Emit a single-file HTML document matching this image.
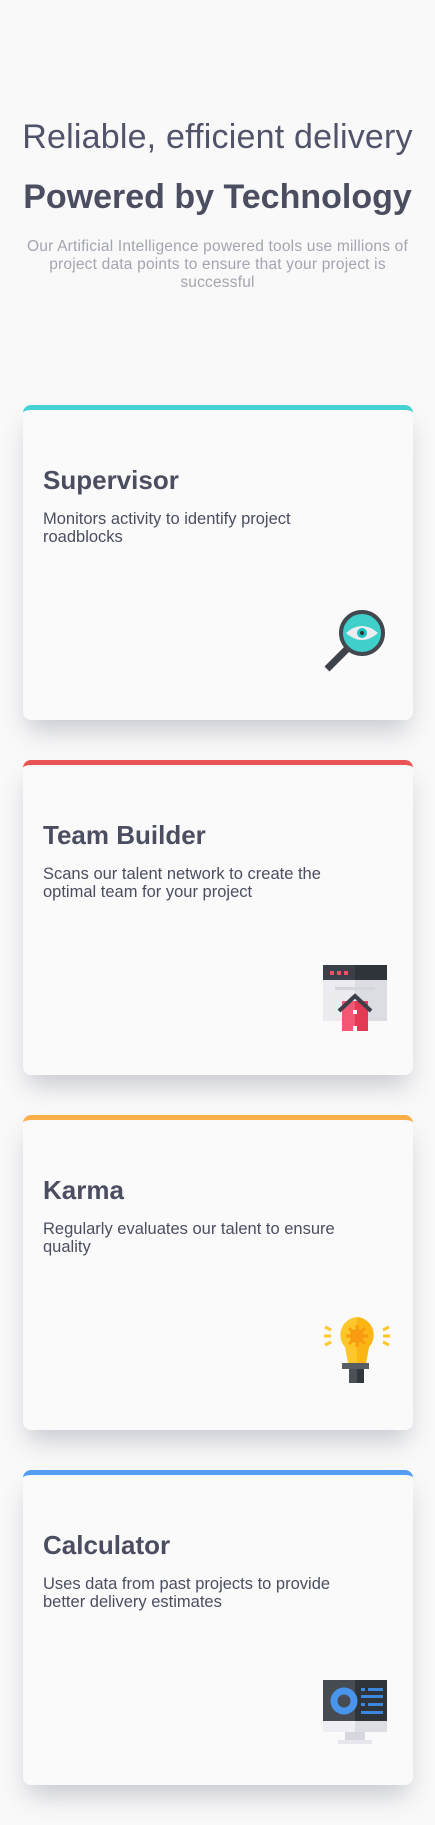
<!DOCTYPE html>
<html><head><meta charset="utf-8"><style>
*{margin:0;padding:0;box-sizing:border-box}
body{width:435px;height:1825px;background:#f9f9f9;font-family:"Liberation Sans",sans-serif;position:relative;overflow:hidden}
.h1{position:absolute;top:118px;left:0;width:435px;text-align:center;font-size:34px;font-weight:300;color:#50536a;letter-spacing:0.2px}
.h2{position:absolute;top:178px;left:0;width:435px;text-align:center;font-size:34px;font-weight:700;color:#4b4e60}
.p{position:absolute;top:238px;left:0;width:435px;text-align:center;font-size:15.5px;line-height:18px;color:#a3a5b0;letter-spacing:0.2px}
.card{position:absolute;left:23px;width:390px;height:315px;background:#fafafa;border-radius:8px;border-top:5px solid;box-shadow:0 15px 25px -5px rgba(70,75,100,0.28)}
.card h3{position:absolute;left:20px;top:55px;font-size:26px;font-weight:700;color:#4b4e60}
.card p{position:absolute;left:20px;top:100px;width:360px;font-size:16.5px;line-height:18px;color:#4b4e60;font-weight:300}
.card svg{position:absolute;left:290px;top:185px}
</style></head><body>
<div class="h1">Reliable, efficient delivery</div>
<div class="h2">Powered by Technology</div>
<div class="p">Our Artificial Intelligence powered tools use millions of<br>project data points to ensure that your project is<br>successful</div>

<div class="card" style="top:405px;border-color:#44d3d2">
<h3>Supervisor</h3>
<p>Monitors activity to identify project<br>roadblocks</p>
<svg width="90" height="90" viewBox="0 0 90 90">
<line x1="34" y1="54" x2="14" y2="74" stroke="#3d4349" stroke-width="7"/>
<circle cx="49" cy="38" r="21" fill="#3fd0cc" stroke="#42484e" stroke-width="4"/>
<path d="M33 38 Q49 24 65 38 Q49 52 33 38Z" fill="#ececf1"/>
<circle cx="49" cy="38" r="5" fill="#19c2c0"/><circle cx="49" cy="38" r="2" fill="#333"/>
</svg></div>

<div class="card" style="top:760px;border-color:#ea5353">
<h3>Team Builder</h3>
<p>Scans our talent network to create the<br>optimal team for your project</p>
<svg width="90" height="90" viewBox="0 0 90 90">
<rect x="10" y="15" width="64" height="56" fill="#ebebf0"/><rect x="42" y="30" width="32" height="41" fill="#dcdce3"/>
<rect x="10" y="15" width="32" height="15" fill="#3b4048"/><rect x="42" y="15" width="32" height="15" fill="#2f343b"/>
<rect x="17" y="21" width="4" height="4" fill="#f05069"/><rect x="24" y="21" width="4" height="4" fill="#f05069"/><rect x="31" y="21" width="4" height="4" fill="#f05069"/>
<rect x="22" y="37" width="40" height="3" fill="#d5d5dd"/>
<rect x="29" y="51" width="13" height="30" fill="#f25873"/><rect x="42" y="51" width="13" height="30" fill="#e23a55"/>
<polyline points="26,61 42,46 58,61" fill="none" stroke="#3b4048" stroke-width="4"/>
<rect x="40" y="60" width="4" height="4" fill="#fff"/><rect x="40" y="76" width="4" height="5" fill="#fff"/>
</svg></div>

<div class="card" style="top:1115px;border-color:#fcae4a">
<h3>Karma</h3>
<p>Regularly evaluates our talent to ensure<br>quality</p>
<svg width="90" height="90" viewBox="0 0 90 90">
<path d="M44 12 A18 18 0 0 0 32 42 L35 58 L53 58 L56 42 A18 18 0 0 0 44 12Z" fill="#fdc62a"/>
<path d="M44 12 A18 18 0 0 1 56 42 L53 58 L44 58Z" fill="#fbb515"/>
<circle cx="44" cy="31" r="7" fill="#f99a10"/>
<g stroke="#f99a10" stroke-width="3"><line x1="44" y1="20" x2="44" y2="42"/><line x1="33" y1="31" x2="55" y2="31"/><line x1="36" y1="23" x2="52" y2="39"/><line x1="52" y1="23" x2="36" y2="39"/></g>
<rect x="29" y="58" width="27" height="6" fill="#585d63"/><rect x="36" y="64" width="15" height="14" fill="#4b5056"/><rect x="44" y="64" width="7" height="14" fill="#33373c"/>
<g stroke="#fdc62a" stroke-width="3"><line x1="11" y1="31" x2="18" y2="31"/><line x1="12" y1="22" x2="18" y2="25"/><line x1="12" y1="40" x2="18" y2="37"/><line x1="70" y1="31" x2="77" y2="31"/><line x1="70" y1="25" x2="76" y2="22"/><line x1="70" y1="37" x2="76" y2="40"/></g>
</svg></div>

<div class="card" style="top:1470px;border-color:#549ef2">
<h3>Calculator</h3>
<p>Uses data from past projects to provide<br>better delivery estimates</p>
<svg width="90" height="90" viewBox="0 0 90 90">
<rect x="10" y="20" width="32" height="41" fill="#474c53"/><rect x="42" y="20" width="32" height="41" fill="#2f343a"/>
<rect x="10" y="61" width="32" height="11" fill="#efeff3"/><rect x="42" y="61" width="32" height="11" fill="#dddde4"/>
<rect x="32" y="72" width="20" height="8" fill="#d7d7df"/><rect x="25" y="80" width="34" height="4" fill="#e6e6ec"/>
<circle cx="31" cy="41" r="10" fill="none" stroke="#4a95ec" stroke-width="7"/>
<g fill="#3b88de"><rect x="48" y="28" width="4" height="3"/><rect x="55" y="28" width="15" height="3"/><rect x="48" y="35" width="22" height="3"/><rect x="48" y="43" width="4" height="3"/><rect x="55" y="43" width="15" height="3"/><rect x="48" y="51" width="22" height="3"/></g>
</svg></div>
</body></html>
